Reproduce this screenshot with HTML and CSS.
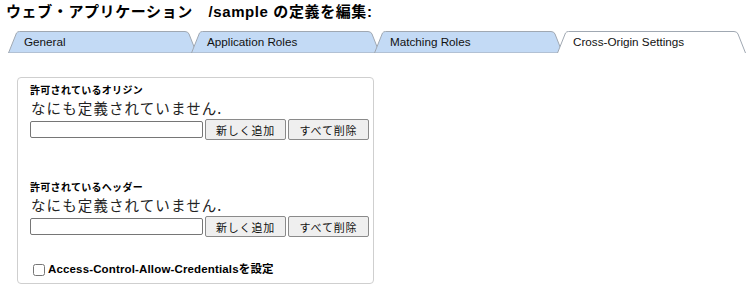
FILE: index.html
```html
<!DOCTYPE html>
<html lang="ja">
<head>
    <meta charset="UTF-8">
    <title>ウェブ・アプリケーション /sample の定義を編集</title>
    <link rel="stylesheet" href="styles.css">
</head>
<body>
    <h1 class="titulo">ウェブ・アプリケーション　/sample の定義を編集:</h1>

    <div class="pestanas">
        <div class="pestana">
            <svg class="forma" viewBox="0 0 189 22" preserveAspectRatio="none"><path d="M0.5,22 L8.5,2 Q9.5,0.5 11.5,0.5 L177,0.5 Q180,0.5 181,3 L188.5,22 Z" fill="#c3daf5" stroke="#a0a8b2"/></svg>
            <span>General</span>
        </div>
        <div class="pestana">
            <svg class="forma" viewBox="0 0 189 22" preserveAspectRatio="none"><path d="M0.5,22 L8.5,2 Q9.5,0.5 11.5,0.5 L177,0.5 Q180,0.5 181,3 L188.5,22 Z" fill="#c3daf5" stroke="#a0a8b2"/></svg>
            <span>Application Roles</span>
        </div>
        <div class="pestana">
            <svg class="forma" viewBox="0 0 189 22" preserveAspectRatio="none"><path d="M0.5,22 L8.5,2 Q9.5,0.5 11.5,0.5 L177,0.5 Q180,0.5 181,3 L188.5,22 Z" fill="#c3daf5" stroke="#a0a8b2"/></svg>
            <span>Matching Roles</span>
        </div>
        <div class="pestana activa">
            <svg class="forma" viewBox="0 0 189 22" preserveAspectRatio="none"><path d="M0.5,22 L8.5,2 Q9.5,0.5 11.5,0.5 L177,0.5 Q180,0.5 181,3 L188.5,22" fill="#ffffff" stroke="#a0a8b2"/></svg>
            <span>Cross-Origin Settings</span>
        </div>
    </div>

    <div class="panel">
        <div class="grupo primero">
            <div class="etiqueta">許可されているオリジン</div>
            <div class="vacio">なにも定義されていません.</div>
            <div class="fila">
                <input type="text" class="campo">
                <button class="boton">新しく追加</button>
                <button class="boton">すべて削除</button>
            </div>
        </div>
        <div class="grupo">
            <div class="etiqueta">許可されているヘッダー</div>
            <div class="vacio">なにも定義されていません.</div>
            <div class="fila">
                <input type="text" class="campo">
                <button class="boton">新しく追加</button>
                <button class="boton">すべて削除</button>
            </div>
        </div>
        <label class="credenciales">
            <input type="checkbox" class="casilla">
            <span>Access-Control-Allow-Credentialsを設定</span>
        </label>
    </div>
</body>
</html>
```

FILE: styles.css
```css
body {
    font-family: "Liberation Sans", "Noto Sans CJK JP", sans-serif;
    background: #ffffff;
    color: #000000;
    margin: 0;
    padding: 0;
    width: 747px;
    height: 304px;
    overflow: hidden;
}

.titulo {
    margin: 0;
    padding: 2px 0 0 6px;
    height: 26px;
    font-size: 15px;
    font-weight: bold;
    letter-spacing: 0.6px;
    line-height: 20px;
}

.pestanas {
    display: flex;
    margin-left: 8px;
    height: 22px;
    margin-top: 3px;
}

.pestana {
    position: relative;
    flex: 0 0 189px;
    height: 22px;
    margin-right: -6px;
    font-size: 11.7px;
    line-height: 21px;
    color: #111;
}

.forma {
    position: absolute;
    left: 0;
    top: 0;
    width: 100%;
    height: 100%;
}

.pestana span {
    position: relative;
    padding-left: 16px;
}

.panel {
    margin: 24px 0 0 17px;
    width: 343px;
    padding: 4px 0 7px 12px;
    border: 1px solid #cfcfcf;
    border-radius: 4px;
    font-family: "Noto Sans CJK JP", "Liberation Sans", sans-serif;
}

.primero {
    height: 97px;
}

.etiqueta {
    font-size: 10px;
    font-weight: bold;
    line-height: 15px;
    letter-spacing: 0.3px;
}

.vacio {
    font-size: 14.5px;
    line-height: 21px;
    letter-spacing: 1.1px;
    color: #222;
    margin-left: 1px;
}

.fila {
    display: flex;
    align-items: center;
    gap: 2px;
    margin-top: 1px;
}

.campo {
    width: 169px;
    height: 15px;
    margin: 0;
    padding: 0 1px;
    border: 1px solid #767676;
    border-radius: 2px;
}

.boton {
    height: 21px;
    width: 81px;
    margin: 0;
    padding: 0;
    font-family: "Noto Sans CJK JP", sans-serif;
    font-size: 11px;
    letter-spacing: 0.8px;
    color: #111;
    background: #efefef;
    border: 1px solid #8a8a8a;
    border-radius: 2px;
}

.credenciales {
    display: flex;
    align-items: center;
    gap: 3px;
    margin: 26px 0 0 3px;
    font-size: 11.5px;
    letter-spacing: 0.15px;
    line-height: 13px;
    font-weight: bold;
    font-family: "Liberation Sans", "Noto Sans CJK JP", sans-serif;
}

.casilla {
    width: 12px;
    height: 12px;
    margin: 0;
}
```
